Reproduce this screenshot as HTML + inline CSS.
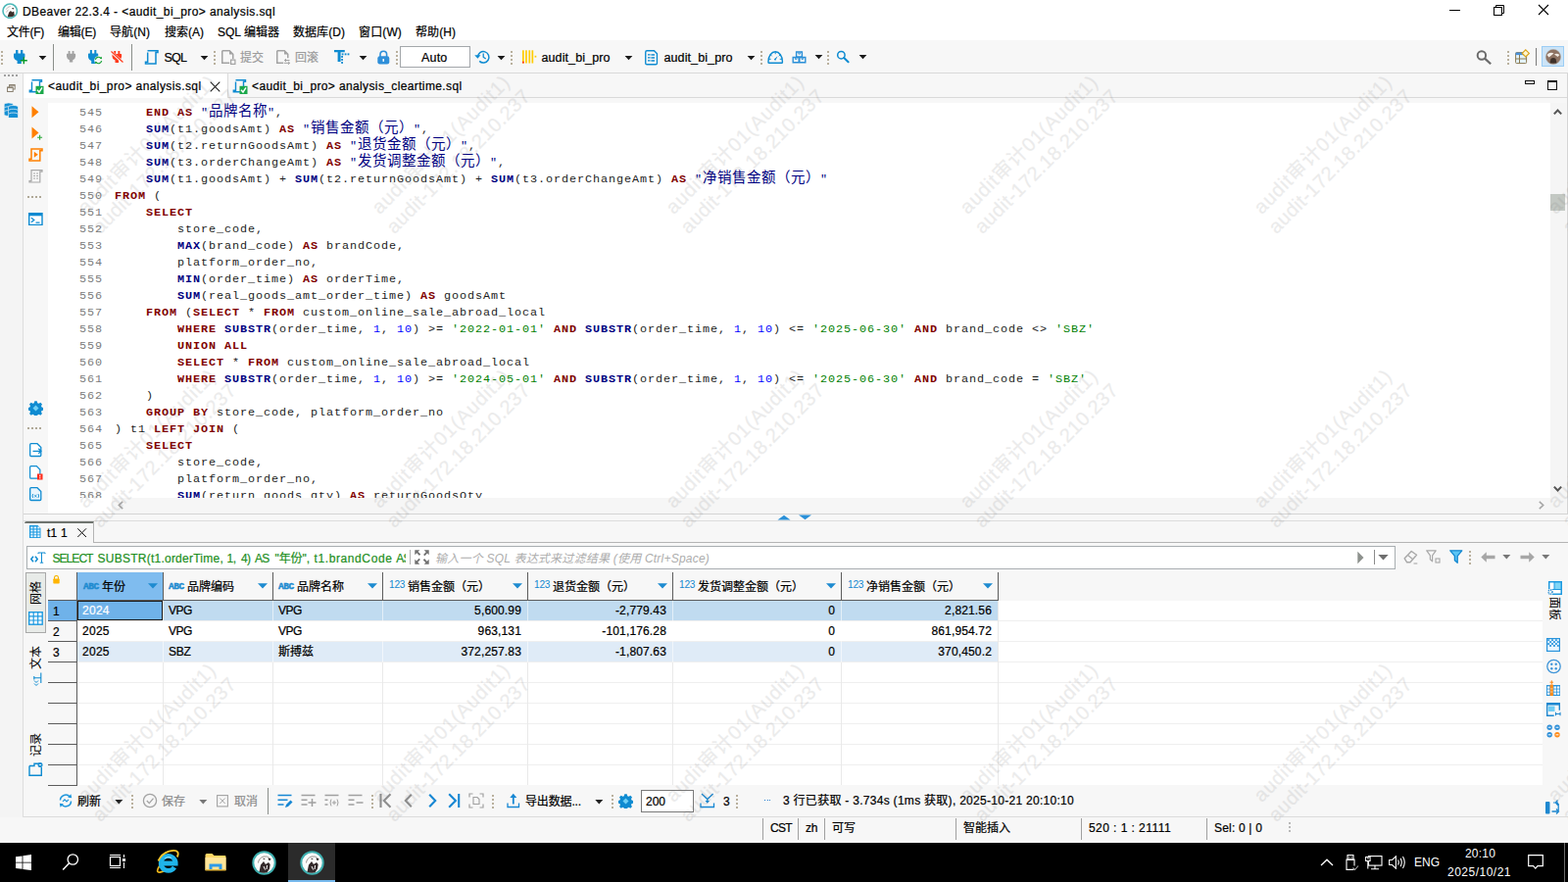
<!DOCTYPE html>
<html lang="zh-CN"><head><meta charset="utf-8"><title>DBeaver 22.3.4 - &lt;audit_bi_pro&gt; analysis.sql</title>
<style>
html,body{margin:0;padding:0;background:#f7f7f7;}
body{width:1600px;height:900px;overflow:hidden;position:relative;font-family:"Liberation Sans","Noto Sans CJK SC",sans-serif;font-size:12px;color:#000;}
.b{position:absolute;box-sizing:border-box;}
.t{position:absolute;white-space:pre;line-height:20px;height:20px;-webkit-text-stroke:0.22px;}
.code{position:absolute;white-space:pre;font-family:"Liberation Mono","Noto Sans CJK SC",monospace;font-size:11.8px;letter-spacing:0.919px;line-height:17px;height:17px;color:#1c1c1c;}
.code b{font-weight:bold;color:#800000;}
.code i{font-style:normal;font-weight:bold;color:#000080;}
.code s{text-decoration:none;color:#008000;}
.code u{text-decoration:none;color:#0000ff;}
.code q{quotes:none;color:#000080;}
.code q:before,.code q:after{content:none;}
.code em{font-style:normal;font-family:"Noto Sans CJK SC",sans-serif;font-size:14.5px;letter-spacing:0.5px;line-height:0;}
.ln{position:absolute;white-space:pre;font-family:"Liberation Mono",monospace;font-size:11.8px;letter-spacing:0.919px;line-height:17px;height:17px;color:#7b7b7b;left:81px;width:24px;text-align:right;}
.wm{position:absolute;white-space:pre;font-size:20px;line-height:24px;color:#787878;-webkit-text-stroke:0.25px #787878;opacity:0.14;transform-origin:0 0;transform:rotate(-45deg);pointer-events:none;}
</style></head><body>
<div class="b" style="left:0px;top:0px;width:1600px;height:41px;background:#fff;"></div>
<div class="t" style="left:23px;top:1.84px;font-size:12px;color:#000;letter-spacing:0.421px;">DBeaver 22.3.4 - &lt;audit_bi_pro&gt; analysis.sql</div>
<div class="t" style="left:7px;top:22.84px;font-size:12px;color:#000;letter-spacing:-0.266px;">文件(F)</div>
<div class="t" style="left:59px;top:22.84px;font-size:12px;color:#000;letter-spacing:-0.200px;">编辑(E)</div>
<div class="t" style="left:112px;top:22.84px;font-size:12px;color:#000;letter-spacing:0.066px;">导航(N)</div>
<div class="t" style="left:168px;top:22.84px;font-size:12px;color:#000;letter-spacing:0.000px;">搜索(A)</div>
<div class="t" style="left:222px;top:22.84px;font-size:12px;color:#000;letter-spacing:0.013px;">SQL 编辑器</div>
<div class="t" style="left:299px;top:22.84px;font-size:12px;color:#000;letter-spacing:0.055px;">数据库(D)</div>
<div class="t" style="left:366px;top:22.84px;font-size:12px;color:#000;letter-spacing:0.134px;">窗口(W)</div>
<div class="t" style="left:424px;top:22.84px;font-size:12px;color:#000;letter-spacing:0.066px;">帮助(H)</div>
<div class="b" style="left:0px;top:41px;width:1600px;height:34px;background:#f7f7f7;"></div>
<div class="b" style="left:0px;top:74px;width:1600px;height:1px;background:#d9d9d9;"></div>
<div class="b" style="left:0px;top:75px;width:1600px;height:26px;background:#f7f7f7;"></div>
<div class="b" style="left:0px;top:75px;width:24px;height:785px;background:#f4f4f4;"></div>
<div class="b" style="left:24px;top:75px;width:208px;height:25px;background:#fff;"></div>
<div class="b" style="left:232px;top:75px;width:1px;height:25px;background:#dadada;"></div>
<div class="b" style="left:233px;top:99px;width:1367px;height:1px;background:#dadada;"></div>
<div class="t" style="left:49px;top:77.84px;font-size:12px;color:#000;letter-spacing:0.410px;">&lt;audit_bi_pro&gt; analysis.sql</div>
<div class="t" style="left:257px;top:77.84px;font-size:12px;color:#000;letter-spacing:0.370px;">&lt;audit_bi_pro&gt; analysis_cleartime.sql</div>
<div class="b" style="left:24px;top:100px;width:1576px;height:425px;background:#f7f7f7;"></div>
<div class="b" style="left:49px;top:105px;width:1533px;height:419px;background:#fff;"></div>
<div class="b" style="left:1582px;top:105px;width:16px;height:419px;background:#f5f5f5;"></div>
<div class="b" style="left:114px;top:508px;width:1468px;height:16px;background:#f6f6f6;"></div>
<div class="b" style="left:24px;top:524px;width:1576px;height:1px;background:#d4d4d4;"></div>
<div class="b" style="left:1599px;top:75px;width:1px;height:758px;background:#d4d4d4;"></div>
<div class="b" style="left:49px;top:105px;width:1533px;height:403px;overflow:hidden;"><div class="ln" style="top:2px;left:32px">545</div><div class="code" style="left:68px;top:2px">    <b>END</b> <b>AS</b> <q>"<em>品牌名称</em>"</q>,</div><div class="ln" style="top:19px;left:32px">546</div><div class="code" style="left:68px;top:19px">    <i>SUM</i>(t1.goodsAmt) <b>AS</b> <q>"<em>销售金额（元）</em>"</q>,</div><div class="ln" style="top:36px;left:32px">547</div><div class="code" style="left:68px;top:36px">    <i>SUM</i>(t2.returnGoodsAmt) <b>AS</b> <q>"<em>退货金额（元）</em>"</q>,</div><div class="ln" style="top:53px;left:32px">548</div><div class="code" style="left:68px;top:53px">    <i>SUM</i>(t3.orderChangeAmt) <b>AS</b> <q>"<em>发货调整金额（元）</em>"</q>,</div><div class="ln" style="top:70px;left:32px">549</div><div class="code" style="left:68px;top:70px">    <i>SUM</i>(t1.goodsAmt) + <i>SUM</i>(t2.returnGoodsAmt) + <i>SUM</i>(t3.orderChangeAmt) <b>AS</b> <q>"<em>净销售金额（元）</em>"</q></div><div class="ln" style="top:87px;left:32px">550</div><div class="code" style="left:68px;top:87px"><b>FROM</b> (</div><div class="ln" style="top:104px;left:32px">551</div><div class="code" style="left:68px;top:104px">    <b>SELECT</b></div><div class="ln" style="top:121px;left:32px">552</div><div class="code" style="left:68px;top:121px">        store_code,</div><div class="ln" style="top:138px;left:32px">553</div><div class="code" style="left:68px;top:138px">        <i>MAX</i>(brand_code) <b>AS</b> brandCode,</div><div class="ln" style="top:155px;left:32px">554</div><div class="code" style="left:68px;top:155px">        platform_order_no,</div><div class="ln" style="top:172px;left:32px">555</div><div class="code" style="left:68px;top:172px">        <i>MIN</i>(order_time) <b>AS</b> orderTime,</div><div class="ln" style="top:189px;left:32px">556</div><div class="code" style="left:68px;top:189px">        <i>SUM</i>(real_goods_amt_order_time) <b>AS</b> goodsAmt</div><div class="ln" style="top:206px;left:32px">557</div><div class="code" style="left:68px;top:206px">    <b>FROM</b> (<b>SELECT</b> * <b>FROM</b> custom_online_sale_abroad_local</div><div class="ln" style="top:223px;left:32px">558</div><div class="code" style="left:68px;top:223px">        <b>WHERE</b> <i>SUBSTR</i>(order_time, <u>1</u>, <u>10</u>) &gt;= <s>'2022-01-01'</s> <b>AND</b> <i>SUBSTR</i>(order_time, <u>1</u>, <u>10</u>) &lt;= <s>'2025-06-30'</s> <b>AND</b> brand_code &lt;&gt; <s>'SBZ'</s></div><div class="ln" style="top:240px;left:32px">559</div><div class="code" style="left:68px;top:240px">        <b>UNION</b> <b>ALL</b></div><div class="ln" style="top:257px;left:32px">560</div><div class="code" style="left:68px;top:257px">        <b>SELECT</b> * <b>FROM</b> custom_online_sale_abroad_local</div><div class="ln" style="top:274px;left:32px">561</div><div class="code" style="left:68px;top:274px">        <b>WHERE</b> <i>SUBSTR</i>(order_time, <u>1</u>, <u>10</u>) &gt;= <s>'2024-05-01'</s> <b>AND</b> <i>SUBSTR</i>(order_time, <u>1</u>, <u>10</u>) &lt;= <s>'2025-06-30'</s> <b>AND</b> brand_code = <s>'SBZ'</s></div><div class="ln" style="top:291px;left:32px">562</div><div class="code" style="left:68px;top:291px">    )</div><div class="ln" style="top:308px;left:32px">563</div><div class="code" style="left:68px;top:308px">    <b>GROUP</b> <b>BY</b> store_code, platform_order_no</div><div class="ln" style="top:325px;left:32px">564</div><div class="code" style="left:68px;top:325px">) t1 <b>LEFT</b> <b>JOIN</b> (</div><div class="ln" style="top:342px;left:32px">565</div><div class="code" style="left:68px;top:342px">    <b>SELECT</b></div><div class="ln" style="top:359px;left:32px">566</div><div class="code" style="left:68px;top:359px">        store_code,</div><div class="ln" style="top:376px;left:32px">567</div><div class="code" style="left:68px;top:376px">        platform_order_no,</div><div class="ln" style="top:393px;left:32px">568</div><div class="code" style="left:68px;top:393px">        <i>SUM</i>(return_goods_qty) <b>AS</b> returnGoodsQty</div></div>
<div class="b" style="left:24px;top:525px;width:1576px;height:336px;background:#f7f7f7;"></div>
<div class="b" style="left:24px;top:531px;width:1576px;height:1px;background:#dcdcdc;"></div>
<div class="b" style="left:95px;top:553px;width:1505px;height:1px;background:#b4b4b4;"></div>
<div class="b" style="left:25px;top:532px;width:71px;height:22px;background:#f7f7f7;border-right:1px solid #b4b4b4;border-top:2px solid #6f746f;border-top-left-radius:2px;"></div>
<div class="t" style="left:48px;top:533.84px;font-size:12px;color:#000;letter-spacing:0.246px;">t1 1</div>
<div class="b" style="left:27px;top:557px;width:1397px;height:24px;background:#fff;border:1px solid #a9aeb1;"></div>
<div class="b" style="left:28px;top:558px;width:386px;height:22px;overflow:hidden;"><div class="t" style="left:25.5px;top:1.84px;font-size:12px;color:#1f8f1f;letter-spacing:-0.948px;">SELECT</div><div class="t" style="left:71.5px;top:1.84px;font-size:12px;color:#1f8f1f;letter-spacing:0.245px;">SUBSTR(t1.orderTime,</div><div class="t" style="left:203.5px;top:1.84px;font-size:12px;color:#1f8f1f;letter-spacing:-0.508px;">1,</div><div class="t" style="left:218px;top:1.84px;font-size:12px;color:#1f8f1f;letter-spacing:-0.586px;">4)</div><div class="t" style="left:232px;top:1.84px;font-size:12px;color:#1f8f1f;letter-spacing:-0.758px;">AS</div><div class="t" style="left:252.5px;top:1.84px;font-size:12px;color:#1f8f1f;letter-spacing:-0.072px;">"年份",</div><div class="t" style="left:292.5px;top:1.84px;font-size:12px;color:#1f8f1f;letter-spacing:0.605px;">t1.brandCode</div><div class="t" style="left:376.2px;top:1.84px;font-size:12px;color:#1f8f1f;letter-spacing:-0.758px;">AS</div></div>
<div class="b" style="left:418px;top:561px;width:1px;height:15px;background:#b0b0b0;"></div>
<div class="t" style="left:444px;top:559.84px;font-size:12px;color:#adadad;font-style:italic;letter-spacing:0.217px;;-webkit-text-stroke:0">输入一个 SQL 表达式来过滤结果 (使用 Ctrl+Space)</div>
<div class="b" style="left:49px;top:613px;width:1525px;height:188px;background:#fff;"></div>
<div class="b" style="left:49px;top:584px;width:970px;height:28px;background:#f7f7f7;"></div>
<div class="b" style="left:79px;top:584px;width:87px;height:28px;background:#7fbcef;"></div>
<div class="b" style="left:79px;top:613px;width:939px;height:20px;background:#c0dbf0;"></div>
<div class="b" style="left:79px;top:655px;width:939px;height:20px;background:#dfebf7;"></div>
<div class="b" style="left:49px;top:613px;width:29px;height:188px;background:#f7f7f7;"></div>
<div class="b" style="left:49px;top:613px;width:29px;height:20px;background:#6fb2e9;"></div>
<div class="b" style="left:79px;top:613px;width:87px;height:20px;background:#6fb2e9;border:1px solid #1a1a1a;"></div>
<div class="b" style="left:79px;top:633px;width:1495px;height:1px;background:#efefef;"></div>
<div class="b" style="left:79px;top:654px;width:1495px;height:1px;background:#efefef;"></div>
<div class="b" style="left:79px;top:675px;width:1495px;height:1px;background:#efefef;"></div>
<div class="b" style="left:79px;top:696px;width:1495px;height:1px;background:#efefef;"></div>
<div class="b" style="left:79px;top:717px;width:1495px;height:1px;background:#efefef;"></div>
<div class="b" style="left:79px;top:738px;width:1495px;height:1px;background:#efefef;"></div>
<div class="b" style="left:79px;top:759px;width:1495px;height:1px;background:#efefef;"></div>
<div class="b" style="left:79px;top:780px;width:1495px;height:1px;background:#efefef;"></div>
<div class="b" style="left:166px;top:613px;width:1px;height:188px;background:#e9e9e9;"></div>
<div class="b" style="left:278px;top:613px;width:1px;height:188px;background:#e9e9e9;"></div>
<div class="b" style="left:390px;top:613px;width:1px;height:188px;background:#e9e9e9;"></div>
<div class="b" style="left:538px;top:613px;width:1px;height:188px;background:#e9e9e9;"></div>
<div class="b" style="left:686px;top:613px;width:1px;height:188px;background:#e9e9e9;"></div>
<div class="b" style="left:858px;top:613px;width:1px;height:188px;background:#e9e9e9;"></div>
<div class="b" style="left:1018px;top:613px;width:1px;height:188px;background:#e9e9e9;"></div>
<div class="b" style="left:79px;top:613px;width:939px;height:20px;background:#c0dbf0;"></div>
<div class="b" style="left:79px;top:634px;width:939px;height:20px;background:#fff;"></div>
<div class="b" style="left:79px;top:655px;width:939px;height:20px;background:#dfebf7;"></div>
<div class="b" style="left:166px;top:613px;width:1px;height:63px;background:#fff;opacity:.55;"></div>
<div class="b" style="left:278px;top:613px;width:1px;height:63px;background:#fff;opacity:.55;"></div>
<div class="b" style="left:390px;top:613px;width:1px;height:63px;background:#fff;opacity:.55;"></div>
<div class="b" style="left:538px;top:613px;width:1px;height:63px;background:#fff;opacity:.55;"></div>
<div class="b" style="left:686px;top:613px;width:1px;height:63px;background:#fff;opacity:.55;"></div>
<div class="b" style="left:858px;top:613px;width:1px;height:63px;background:#fff;opacity:.55;"></div>
<div class="b" style="left:79px;top:613px;width:87px;height:20px;background:#6fb2e9;border:1px solid #1a1a1a;"></div>
<div class="b" style="left:49px;top:612px;width:970px;height:1px;background:#5c5c5c;"></div>
<div class="b" style="left:78px;top:584px;width:1px;height:218px;background:#5c5c5c;"></div>
<div class="b" style="left:166px;top:584px;width:1px;height:28px;background:#5c5c5c;"></div>
<div class="b" style="left:278px;top:584px;width:1px;height:28px;background:#5c5c5c;"></div>
<div class="b" style="left:390px;top:584px;width:1px;height:28px;background:#5c5c5c;"></div>
<div class="b" style="left:538px;top:584px;width:1px;height:28px;background:#5c5c5c;"></div>
<div class="b" style="left:686px;top:584px;width:1px;height:28px;background:#5c5c5c;"></div>
<div class="b" style="left:858px;top:584px;width:1px;height:28px;background:#5c5c5c;"></div>
<div class="b" style="left:1018px;top:584px;width:1px;height:28px;background:#5c5c5c;"></div>
<div class="b" style="left:49px;top:633px;width:29px;height:1px;background:#5c5c5c;"></div>
<div class="b" style="left:49px;top:654px;width:29px;height:1px;background:#5c5c5c;"></div>
<div class="b" style="left:49px;top:675px;width:29px;height:1px;background:#5c5c5c;"></div>
<div class="b" style="left:49px;top:696px;width:29px;height:1px;background:#5c5c5c;"></div>
<div class="b" style="left:49px;top:717px;width:29px;height:1px;background:#5c5c5c;"></div>
<div class="b" style="left:49px;top:738px;width:29px;height:1px;background:#5c5c5c;"></div>
<div class="b" style="left:49px;top:759px;width:29px;height:1px;background:#5c5c5c;"></div>
<div class="b" style="left:49px;top:780px;width:29px;height:1px;background:#5c5c5c;"></div>
<div class="b" style="left:49px;top:801px;width:29px;height:1px;background:#5c5c5c;"></div>
<div class="t" style="left:104px;top:588.84px;font-size:12px;color:#000;">年份</div>
<div class="t" style="left:85px;top:589.47px;font-size:9.5px;color:#1e8bd0;font-weight:700;font-family:'Liberation Mono','Noto Sans CJK SC',monospace;letter-spacing:-0.436px;;-webkit-text-stroke:0.45px #1e8bd0">ABC</div>
<svg class="b" style="left:151px;top:595px;" width="10" height="6" viewBox="0 0 10 6"><path d="M0 0.300H10L5 5.500Z" fill="#1e8bd0"/></svg>
<div class="t" style="left:191px;top:588.84px;font-size:12px;color:#000;">品牌编码</div>
<div class="t" style="left:172px;top:589.47px;font-size:9.5px;color:#1e8bd0;font-weight:700;font-family:'Liberation Mono','Noto Sans CJK SC',monospace;letter-spacing:-0.436px;;-webkit-text-stroke:0.45px #1e8bd0">ABC</div>
<svg class="b" style="left:263px;top:595px;" width="10" height="6" viewBox="0 0 10 6"><path d="M0 0.300H10L5 5.500Z" fill="#1e8bd0"/></svg>
<div class="t" style="left:303px;top:588.84px;font-size:12px;color:#000;">品牌名称</div>
<div class="t" style="left:284px;top:589.47px;font-size:9.5px;color:#1e8bd0;font-weight:700;font-family:'Liberation Mono','Noto Sans CJK SC',monospace;letter-spacing:-0.436px;;-webkit-text-stroke:0.45px #1e8bd0">ABC</div>
<svg class="b" style="left:375px;top:595px;" width="10" height="6" viewBox="0 0 10 6"><path d="M0 0.300H10L5 5.500Z" fill="#1e8bd0"/></svg>
<div class="t" style="left:416px;top:588.84px;font-size:12px;color:#000;">销售金额（元）</div>
<div class="t" style="left:397px;top:587.47px;font-size:10.2px;color:#1488d0;letter-spacing:-0.267px;;-webkit-text-stroke:0">123</div>
<svg class="b" style="left:523px;top:595px;" width="10" height="6" viewBox="0 0 10 6"><path d="M0 0.300H10L5 5.500Z" fill="#1e8bd0"/></svg>
<div class="t" style="left:564px;top:588.84px;font-size:12px;color:#000;">退货金额（元）</div>
<div class="t" style="left:545px;top:587.47px;font-size:10.2px;color:#1488d0;letter-spacing:-0.267px;;-webkit-text-stroke:0">123</div>
<svg class="b" style="left:671px;top:595px;" width="10" height="6" viewBox="0 0 10 6"><path d="M0 0.300H10L5 5.500Z" fill="#1e8bd0"/></svg>
<div class="t" style="left:712px;top:588.84px;font-size:12px;color:#000;">发货调整金额（元）</div>
<div class="t" style="left:693px;top:587.47px;font-size:10.2px;color:#1488d0;letter-spacing:-0.267px;;-webkit-text-stroke:0">123</div>
<svg class="b" style="left:843px;top:595px;" width="10" height="6" viewBox="0 0 10 6"><path d="M0 0.300H10L5 5.500Z" fill="#1e8bd0"/></svg>
<div class="t" style="left:884px;top:588.84px;font-size:12px;color:#000;">净销售金额（元）</div>
<div class="t" style="left:865px;top:587.47px;font-size:10.2px;color:#1488d0;letter-spacing:-0.267px;;-webkit-text-stroke:0">123</div>
<svg class="b" style="left:1003px;top:595px;" width="10" height="6" viewBox="0 0 10 6"><path d="M0 0.300H10L5 5.500Z" fill="#1e8bd0"/></svg>
<div class="t" style="left:54px;top:613.84px;font-size:12px;color:#000;">1</div>
<div class="t" style="left:84px;top:612.84px;font-size:12px;color:#fff;letter-spacing:0.274px;">2024</div>
<div class="t" style="left:172px;top:612.84px;font-size:12px;color:#000;letter-spacing:-0.448px;">VPG</div>
<div class="t" style="left:284px;top:612.84px;font-size:12px;color:#000;letter-spacing:-0.448px;">VPG</div>
<div class="t" style="right:1068px;top:612.84px;font-size:12px;color:#000;;letter-spacing:0.15px">5,600.99</div>
<div class="t" style="right:920px;top:612.84px;font-size:12px;color:#000;;letter-spacing:0.15px">-2,779.43</div>
<div class="t" style="right:748px;top:612.84px;font-size:12px;color:#000;;letter-spacing:0.15px">0</div>
<div class="t" style="right:588px;top:612.84px;font-size:12px;color:#000;;letter-spacing:0.15px">2,821.56</div>
<div class="t" style="left:54px;top:634.84px;font-size:12px;color:#000;">2</div>
<div class="t" style="left:84px;top:633.84px;font-size:12px;color:#000;letter-spacing:0.274px;">2025</div>
<div class="t" style="left:172px;top:633.84px;font-size:12px;color:#000;letter-spacing:-0.448px;">VPG</div>
<div class="t" style="left:284px;top:633.84px;font-size:12px;color:#000;letter-spacing:-0.448px;">VPG</div>
<div class="t" style="right:1068px;top:633.84px;font-size:12px;color:#000;;letter-spacing:0.15px">963,131</div>
<div class="t" style="right:920px;top:633.84px;font-size:12px;color:#000;;letter-spacing:0.15px">-101,176.28</div>
<div class="t" style="right:748px;top:633.84px;font-size:12px;color:#000;;letter-spacing:0.15px">0</div>
<div class="t" style="right:588px;top:633.84px;font-size:12px;color:#000;;letter-spacing:0.15px">861,954.72</div>
<div class="t" style="left:54px;top:655.84px;font-size:12px;color:#000;">3</div>
<div class="t" style="left:84px;top:654.84px;font-size:12px;color:#000;letter-spacing:0.274px;">2025</div>
<div class="t" style="left:172px;top:654.84px;font-size:12px;color:#000;letter-spacing:-0.281px;">SBZ</div>
<div class="t" style="left:284px;top:654.84px;font-size:12px;color:#000;letter-spacing:-0.005px;">斯搏兹</div>
<div class="t" style="right:1068px;top:654.84px;font-size:12px;color:#000;;letter-spacing:0.15px">372,257.83</div>
<div class="t" style="right:920px;top:654.84px;font-size:12px;color:#000;;letter-spacing:0.15px">-1,807.63</div>
<div class="t" style="right:748px;top:654.84px;font-size:12px;color:#000;;letter-spacing:0.15px">0</div>
<div class="t" style="right:588px;top:654.84px;font-size:12px;color:#000;;letter-spacing:0.15px">370,450.2</div>
<div class="b" style="left:26px;top:584px;width:21px;height:62px;background:#e8ebe8;border:1px solid #a9a9a9;"></div>
<div class="t" style="left:27px;top:617px;width:20px;height:20px;transform-origin:0 0;transform:rotate(-90deg);font-size:12px;-webkit-text-stroke:0;">网格</div>
<div class="t" style="left:27px;top:683px;width:20px;height:20px;transform-origin:0 0;transform:rotate(-90deg);font-size:12px;-webkit-text-stroke:0;">文本</div>
<div class="t" style="left:27px;top:772px;width:20px;height:20px;transform-origin:0 0;transform:rotate(-90deg);font-size:12px;-webkit-text-stroke:0;">记录</div>
<div class="b" style="left:1575px;top:584px;width:25px;height:248px;background:#f7f7f7;"></div>
<div class="t" style="left:1596px;top:609px;width:24px;height:20px;transform-origin:0 0;transform:rotate(90deg);font-size:12px;-webkit-text-stroke:0;">面板</div>
<div class="b" style="left:24px;top:802px;width:1551px;height:31px;background:#f7f7f7;"></div>
<div class="b" style="left:24px;top:833px;width:1576px;height:1px;background:#dcdcdc;"></div>
<div class="t" style="left:79px;top:807.84px;font-size:12px;color:#000;letter-spacing:-0.008px;">刷新</div>
<div class="t" style="left:165px;top:807.84px;font-size:12px;color:#8c8c8c;letter-spacing:-0.008px;">保存</div>
<div class="t" style="left:239px;top:807.84px;font-size:12px;color:#8c8c8c;letter-spacing:-0.008px;">取消</div>
<div class="t" style="left:536px;top:807.84px;font-size:12px;color:#000;letter-spacing:-0.145px;">导出数据...</div>
<div class="b" style="left:654px;top:806px;width:54px;height:23px;background:#fff;border:1px solid #7a7a7a;"></div>
<div class="t" style="left:659px;top:807.84px;font-size:12px;color:#000;letter-spacing:-0.010px;">200</div>
<div class="t" style="left:738px;top:807.84px;font-size:12px;color:#000;letter-spacing:-0.688px;">3</div>
<div class="t" style="left:799px;top:806.84px;font-size:12px;color:#000;letter-spacing:0.286px;">3 行已获取 - 3.734s (1ms 获取), 2025-10-21 20:10:10</div>
<div class="b" style="left:0px;top:834px;width:1600px;height:26px;background:#f7f7f7;"></div>
<div class="b" style="left:778px;top:835px;width:1px;height:22px;background:#a0a0a0;"></div>
<div class="b" style="left:814px;top:835px;width:1px;height:22px;background:#a0a0a0;"></div>
<div class="b" style="left:841px;top:835px;width:1px;height:22px;background:#a0a0a0;"></div>
<div class="b" style="left:975px;top:835px;width:1px;height:22px;background:#a0a0a0;"></div>
<div class="b" style="left:1103px;top:835px;width:1px;height:22px;background:#a0a0a0;"></div>
<div class="b" style="left:1231px;top:835px;width:1px;height:22px;background:#a0a0a0;"></div>
<div class="t" style="left:786px;top:834.84px;font-size:12px;color:#000;letter-spacing:-0.667px;">CST</div>
<div class="t" style="left:822px;top:834.84px;font-size:12px;color:#000;letter-spacing:-0.344px;">zh</div>
<div class="t" style="left:849px;top:834.84px;font-size:12px;color:#000;letter-spacing:-0.008px;">可写</div>
<div class="t" style="left:983px;top:834.84px;font-size:12px;color:#000;letter-spacing:-0.004px;">智能插入</div>
<div class="t" style="left:1111px;top:834.84px;font-size:12px;color:#000;letter-spacing:0.440px;">520 : 1 : 21111</div>
<div class="t" style="left:1239px;top:834.84px;font-size:12px;color:#000;letter-spacing:0.184px;">Sel: 0 | 0</div>
<div class="b" style="left:0px;top:860px;width:1600px;height:40px;background:#000;"></div>
<div class="b" style="left:294px;top:860px;width:48px;height:40px;background:#2b2b2b;"></div>
<div class="b" style="left:294px;top:898px;width:48px;height:2px;background:#76b9ed;"></div>
<div class="t" style="left:1443px;top:869.84px;font-size:12px;color:#fff;letter-spacing:-0.005px;;-webkit-text-stroke:0">ENG</div>
<div class="t" style="left:1495px;top:860.84px;font-size:12px;color:#fff;letter-spacing:0.194px;;-webkit-text-stroke:0">20:10</div>
<div class="t" style="left:1477px;top:879.84px;font-size:12px;color:#fff;letter-spacing:0.494px;;-webkit-text-stroke:0">2025/10/21</div>
<div class="b" style="left:1596px;top:860px;width:1px;height:40px;background:#6a6a6a;"></div>
<svg class="b" style="left:1.7999999999999998px;top:2.8px;" width="16.4" height="16.4" viewBox="0 0 16.4 16.4"><g transform="translate(8.2,8.2)"><circle r="7.2" fill="#fff" stroke="#4db8b8" stroke-width="1.600"/><path d="M-2.500 5.800L-1 1.200L0.800 -0.300L2.200 1.300L4 0.300L4.600 4.800Q1.500 6.600 -2.500 5.800Z" fill="#3a2f2a"/><path d="M-4 -1.500q1.500-3 4.500-3.200M-3.500 1.500q.5-2 2-3" fill="none" stroke="#b9b3ae" stroke-width="0.900"/><path d="M1.800 -3.300l2.400 .3l-1.200 1.500z" fill="#3a2f2a"/></g></svg>
<div class="b" style="left:1479px;top:10px;width:11px;height:1px;background:#000;"></div>
<svg class="b" style="left:1523px;top:4px;" width="12" height="12" viewBox="0 0 12 12"><path d="M3.5 3.500v-2h8v8h-2" fill="none" stroke="#000" stroke-width="1"/><rect x="1.500" y="3.500" width="8" height="8" fill="none" stroke="#000" stroke-width="1"/></svg>
<svg class="b" style="left:1569px;top:4px;" width="12" height="12" viewBox="0 0 12 12"><path d="M1 1L11 11M11 1L1 11" stroke="#000" stroke-width="1.100" fill="none"/></svg>
<div class="b" style="left:1px;top:52px;width:2px;height:2px;background:#b9b09d;"></div><div class="b" style="left:1px;top:56px;width:2px;height:2px;background:#b9b09d;"></div><div class="b" style="left:1px;top:60px;width:2px;height:2px;background:#b9b09d;"></div><div class="b" style="left:1px;top:64px;width:2px;height:2px;background:#b9b09d;"></div>
<svg class="b" style="left:14px;top:51px;" width="15" height="15" viewBox="0 0 15 15"><path d="M2.2 0h2.400v3.400h2.800v-3.400h2.400v3.400h1.400q.8 0 .8 .9v2.400q0 2.800-3.800 4.400v2.900h-4.400v-2.900q-3.800-1.600-3.800-4.400v-2.400q0-.9 .8-.9h1.400z" fill="#0e8bd1" transform="scale(0.95,1)"/><path d="M6.500 6.800h8v8h-8z" fill="#f7f7f7" opacity="0"/><path d="M10.300 7.300v7M6.800 10.800h7" stroke="#0a9a2a" stroke-width="1.400" fill="none"/></svg>
<svg class="b" style="left:39px;top:57px;" width="9" height="5" viewBox="0 0 9 5"><path d="M0.6 0H8.400L4.500 4.300Z" fill="#1a1a1a"/></svg>
<div class="b" style="left:54px;top:45px;width:1px;height:27px;background:#8b8f8b;"></div>
<svg class="b" style="left:68px;top:52px;" width="10" height="12" viewBox="0 0 10 12"><path d="M2.2 0h2.400v3.400h2.800v-3.400h2.400v3.400h1.400q.8 0 .8 .9v2.400q0 2.800-3.800 4.400v2.900h-4.400v-2.900q-3.800-1.600-3.800-4.400v-2.400q0-.9 .8-.9h1.400z" fill="#a2a2a2" transform="scale(0.76,0.83)"/></svg>
<svg class="b" style="left:90px;top:51px;" width="15" height="15" viewBox="0 0 15 15"><path d="M2.2 0h2.400v3.400h2.800v-3.400h2.400v3.400h1.400q.8 0 .8 .9v2.400q0 2.800-3.800 4.400v2.900h-4.400v-2.900q-3.800-1.600-3.800-4.400v-2.400q0-.9 .8-.9h1.400z" fill="#0e8bd1" transform="scale(0.85,1)"/><circle cx="10.500" cy="10.500" r="4.300" fill="#f7f7f7"/><path d="M7.300 9.800a3.300 3.300 0 0 1 5.600-1.500M13.700 11.200a3.300 3.300 0 0 1-5.600 1.500" fill="none" stroke="#18a338" stroke-width="1.200"/><path d="M11.600 8.800l2.400 .4l-.2-2.500zM9.400 12.200l-2.400-.4l.2 2.500z" fill="#18a338"/></svg>
<svg class="b" style="left:113px;top:51px;" width="13" height="14" viewBox="0 0 13 14"><path d="M2.2 0h2.400v3.400h2.800v-3.400h2.400v3.400h1.400q.8 0 .8 .9v2.400q0 2.800-3.800 4.400v2.900h-4.400v-2.900q-3.800-1.600-3.800-4.400v-2.400q0-.9 .8-.9h1.400z" fill="#ff3a1c" transform="translate(1.500,1) scale(0.8,0.85)"/><path d="M0.500 2L12 12.500" stroke="#f7f7f7" stroke-width="2.600"/><path d="M0.500 1.500L12.500 12.500" stroke="#ff3a1c" stroke-width="1.200"/></svg>
<div class="b" style="left:134px;top:45px;width:1px;height:27px;background:#8b8f8b;"></div>
<svg class="b" style="left:147px;top:51px;" width="15" height="15" viewBox="0 0 15 15"><path d="M3.500 0.800h10.500v1.800h-2v11.400h-10.500v-1.800h2.200v-9.600" fill="none" stroke="#0e8bd1" stroke-width="1.500" stroke-linejoin="miter"/></svg>
<div class="t" style="left:167.5px;top:48.67px;font-size:12.5px;color:#000;letter-spacing:-0.839px;">SQL</div>
<svg class="b" style="left:204px;top:57px;" width="9" height="5" viewBox="0 0 9 5"><path d="M0.6 0H8.400L4.500 4.300Z" fill="#1a1a1a"/></svg>
<div class="b" style="left:218px;top:52px;width:2px;height:2px;background:#b9b09d;"></div><div class="b" style="left:218px;top:56px;width:2px;height:2px;background:#b9b09d;"></div><div class="b" style="left:218px;top:60px;width:2px;height:2px;background:#b9b09d;"></div><div class="b" style="left:218px;top:64px;width:2px;height:2px;background:#b9b09d;"></div>
<svg class="b" style="left:226px;top:51px;" width="15" height="15" viewBox="0 0 15 15"><path d="M.75 .75h7.500l3.500 3.500v5M.75 .75v12.500h7.500" fill="none" stroke="#a3a3a3" stroke-width="1.500"/><path d="M8 .5v4h4z" fill="#a3a3a3"/><rect x="9.600" y="10.100" width="4.300" height="4.300" fill="none" stroke="#a3a3a3" stroke-width="1.200"/></svg>
<div class="t" style="left:245px;top:48.84px;font-size:12px;color:#9c9c9c;letter-spacing:-0.008px;">提交</div>
<svg class="b" style="left:282px;top:51px;" width="15" height="15" viewBox="0 0 15 15"><path d="M.75 .75h7.500l3.500 3.500v4M.75 .75v12.500h6.500" fill="none" stroke="#a3a3a3" stroke-width="1.500"/><path d="M8 .5v4h4z" fill="#a3a3a3"/><path d="M8.500 10.500h5M10 9l-1.700 1.500l1.700 1.500M8 13.300h5.500M12 11.800l1.700 1.500l-1.700 1.500" fill="none" stroke="#a3a3a3" stroke-width="1"/></svg>
<div class="t" style="left:301px;top:48.84px;font-size:12px;color:#9c9c9c;letter-spacing:-0.008px;">回滚</div>
<svg class="b" style="left:341px;top:51px;" width="16" height="15" viewBox="0 0 16 15"><path d="M0 0h10.800v2.200h-4.200v9.700h-3v-9.700h-3.600z" fill="#0e8bd1"/><rect x="7.7" y="3.400" width="1.800" height="1.900" fill="#0e8bd1"/><rect x="10.7" y="3.400" width="1.800" height="1.900" fill="#0e8bd1"/><rect x="13.6" y="3.400" width="1.800" height="1.900" fill="#0e8bd1"/><rect x="7.200" y="6" width="1.800" height="1.900" fill="#0e8bd1"/><rect x="7.200" y="9" width="1.800" height="1.900" fill="#0e8bd1"/><rect x="7.200" y="12" width="1.800" height="1.900" fill="#0e8bd1"/></svg>
<svg class="b" style="left:366px;top:57px;" width="9" height="5" viewBox="0 0 9 5"><path d="M0.6 0H8.400L4.500 4.300Z" fill="#1a1a1a"/></svg>
<svg class="b" style="left:385px;top:51px;" width="13" height="15" viewBox="0 0 13 15"><path d="M3 7v-2.500a3.300 3.300 0 0 1 6.600 0v2.500" fill="none" stroke="#2f8fd9" stroke-width="1.600"/><rect x="0.300" y="6.200" width="12" height="8.300" rx="2.300" fill="#2f8fd9"/><rect x="5.500" y="9" width="1.500" height="2.800" fill="#fff"/></svg>
<div class="b" style="left:404px;top:52px;width:2px;height:2px;background:#b9b09d;"></div><div class="b" style="left:404px;top:56px;width:2px;height:2px;background:#b9b09d;"></div><div class="b" style="left:404px;top:60px;width:2px;height:2px;background:#b9b09d;"></div><div class="b" style="left:404px;top:64px;width:2px;height:2px;background:#b9b09d;"></div>
<div class="b" style="left:408px;top:47px;width:72px;height:22px;background:#fff;border:1px solid #a3a7ab;"></div>
<div class="t" style="left:430px;top:48.67px;font-size:12.5px;color:#000;letter-spacing:0.195px;">Auto</div>
<svg class="b" style="left:484px;top:50px;" width="17" height="16" viewBox="0 0 17 16"><path d="M3.500 8a5.700 5.700 0 1 1 1.700 4.400" fill="none" stroke="#0e8bd1" stroke-width="1.500"/><path d="M0.300 6.200h6.200l-3.100 3.500z" fill="#0e8bd1"/><path d="M9.200 4.500v3.700l2.500 1.800" fill="none" stroke="#0e8bd1" stroke-width="1.300"/></svg>
<svg class="b" style="left:507px;top:57px;" width="9" height="5" viewBox="0 0 9 5"><path d="M0.6 0H8.400L4.500 4.300Z" fill="#1a1a1a"/></svg>
<div class="b" style="left:521px;top:52px;width:2px;height:2px;background:#b9b09d;"></div><div class="b" style="left:521px;top:56px;width:2px;height:2px;background:#b9b09d;"></div><div class="b" style="left:521px;top:60px;width:2px;height:2px;background:#b9b09d;"></div><div class="b" style="left:521px;top:64px;width:2px;height:2px;background:#b9b09d;"></div>
<svg class="b" style="left:533px;top:51px;" width="15" height="14" viewBox="0 0 15 14"><rect x="0" y="0.300" width="1.700" height="13.200" fill="#ffcc00"/><rect x="3.1" y="0.300" width="1.700" height="13.200" fill="#ffcc00"/><rect x="6.4" y="0.300" width="1.700" height="13.200" fill="#ffcc00"/><rect x="9.5" y="0.300" width="1.700" height="13.200" fill="#ffcc00"/><rect x="0" y="11.700" width="1.700" height="1.800" fill="#ff2a1a"/><rect x="12.600" y="5.800" width="1.700" height="1.800" fill="#ffcc00"/></svg>
<div class="t" style="left:552.5px;top:48.67px;font-size:12.5px;color:#000;letter-spacing:0.099px;">audit_bi_pro</div>
<svg class="b" style="left:637px;top:57px;" width="9" height="5" viewBox="0 0 9 5"><path d="M0.6 0H8.400L4.500 4.300Z" fill="#1a1a1a"/></svg>
<svg class="b" style="left:658px;top:51px;" width="14" height="16" viewBox="0 0 14 16"><path d="M.75 2.200q0-1.400 1.400-1.400h7.300l3 3v9.600q0 1.400-1.400 1.400h-8.900q-1.400 0-1.400-1.400z" fill="none" stroke="#0e8bd1" stroke-width="1.400"/><rect x="3" y="4.2" width="2.600" height="1.300" fill="#0e8bd1"/><rect x="6.400" y="4.2" width="3.600" height="1.500" fill="#0e8bd1"/><rect x="3" y="7.2" width="2.600" height="1.300" fill="#0e8bd1"/><rect x="6.400" y="7.2" width="3.600" height="1.500" fill="#0e8bd1"/><rect x="3" y="10.2" width="2.600" height="1.300" fill="#0e8bd1"/><rect x="6.400" y="10.2" width="3.600" height="1.500" fill="#0e8bd1"/></svg>
<div class="t" style="left:677.5px;top:48.67px;font-size:12.5px;color:#000;letter-spacing:0.099px;">audit_bi_pro</div>
<svg class="b" style="left:762px;top:57px;" width="9" height="5" viewBox="0 0 9 5"><path d="M0.6 0H8.400L4.500 4.300Z" fill="#1a1a1a"/></svg>
<div class="b" style="left:776px;top:52px;width:2px;height:2px;background:#b9b09d;"></div><div class="b" style="left:776px;top:56px;width:2px;height:2px;background:#b9b09d;"></div><div class="b" style="left:776px;top:60px;width:2px;height:2px;background:#b9b09d;"></div><div class="b" style="left:776px;top:64px;width:2px;height:2px;background:#b9b09d;"></div>
<svg class="b" style="left:783px;top:51px;" width="17" height="15" viewBox="0 0 17 15"><path d="M1 11.800A7.200 10 0 0 1 15.400 11.800v.7q0 .8-.8 .8h-12.800q-.8 0-.8-.8z" fill="none" stroke="#0e8bd1" stroke-width="1.400"/><path d="M8.200 2v2.200M3.200 4.800l1.400 1.500M13.200 4.800l-1.400 1.500M1.500 9.300h2.200M12.700 9.300h2.200" stroke="#0e8bd1" stroke-width="1"/><path d="M10.600 6.300l-3.800 3.300l1.300 1.300z" fill="#0e8bd1"/></svg>
<svg class="b" style="left:807.5px;top:51.5px;" width="15" height="13" viewBox="0 0 15 13"><path d="M4.600 1h5.800v5h-5.800zM1.200 6.500h6v5.300h-6zM7.800 6.500h6v5.300h-6z" fill="none" stroke="#2a8fd8" stroke-width="1.400"/><path d="M6.800 1.500v1.600h1.600v-1.600M3.400 7v1.400h1.600v-1.400M10 7v1.400h1.600v-1.400" fill="none" stroke="#2a8fd8" stroke-width="0.900"/></svg>
<svg class="b" style="left:831px;top:56px;" width="9" height="5" viewBox="0 0 9 5"><path d="M0.6 0H8.400L4.500 4.300Z" fill="#1a1a1a"/></svg>
<div class="b" style="left:844px;top:52px;width:2px;height:2px;background:#b9b09d;"></div><div class="b" style="left:844px;top:56px;width:2px;height:2px;background:#b9b09d;"></div><div class="b" style="left:844px;top:60px;width:2px;height:2px;background:#b9b09d;"></div><div class="b" style="left:844px;top:64px;width:2px;height:2px;background:#b9b09d;"></div>
<svg class="b" style="left:852px;top:50px;" width="16" height="16" viewBox="0 0 16 16"><circle cx="6.400" cy="6.200" r="3.700" fill="none" stroke="#0e8bd1" stroke-width="1.500"/><path d="M9.200 9l4.400 4.300" stroke="#0e8bd1" stroke-width="2" stroke-linecap="round"/></svg>
<svg class="b" style="left:876px;top:56px;" width="9" height="5" viewBox="0 0 9 5"><path d="M0.6 0H8.400L4.500 4.300Z" fill="#1a1a1a"/></svg>
<svg class="b" style="left:1505px;top:50px;" width="18" height="17" viewBox="0 0 18 17"><circle cx="6.900" cy="6.500" r="4.200" fill="none" stroke="#6b6b6b" stroke-width="2"/><path d="M10 9.600l6.200 5.700" stroke="#6b6b6b" stroke-width="2.200" stroke-linecap="butt"/></svg>
<div class="b" style="left:1538px;top:52px;width:2px;height:2px;background:#b9b09d;"></div><div class="b" style="left:1538px;top:56px;width:2px;height:2px;background:#b9b09d;"></div><div class="b" style="left:1538px;top:60px;width:2px;height:2px;background:#b9b09d;"></div><div class="b" style="left:1538px;top:64px;width:2px;height:2px;background:#b9b09d;"></div>
<svg class="b" style="left:1546px;top:50px;" width="16" height="16" viewBox="0 0 16 16"><rect x="0.600" y="3.600" width="11" height="11" rx="1" fill="#e4f3fd" stroke="#8a7a50" stroke-width="1"/><rect x="0.600" y="3.600" width="11" height="2.500" fill="#4b90d8"/><path d="M0.600 10h11M4.500 6v8.500" stroke="#8a7a50" stroke-width="1"/><path d="M10.800 0.800l3.600 3.600l-3.600 3.600l-3.600-3.600z" fill="#fff6d0" stroke="#d9a31a" stroke-width="1.200"/></svg>
<div class="b" style="left:1567px;top:49px;width:1px;height:18px;background:#7b7b7b;"></div>
<div class="b" style="left:1573px;top:47px;width:23px;height:21px;background:#cce4f7;border:1px solid #9bcdf5;"></div>
<svg class="b" style="left:1577px;top:50px;" width="16" height="16" viewBox="0 0 16 16"><circle cx="8" cy="8" r="7.600" fill="#8d7262"/><path d="M1.500 6q3-3.500 7-1.500l-5 4z" fill="#f4efe9"/><path d="M14.500 6q-3-2-5.500-.5l3.500 2.500z" fill="#efe8e0"/><path d="M5.500 10q2.500-2 5 0l1 4.500h-7z" fill="#3d3029"/><circle cx="8" cy="8" r="7.600" fill="none" stroke="#a89a8e" stroke-width="0.500"/></svg>
<div class="b" style="left:23px;top:75px;width:1px;height:759px;background:#dedede;"></div>
<div class="b" style="left:4px;top:76px;width:2px;height:2px;background:#a0a0a0;"></div>
<div class="b" style="left:8px;top:76px;width:2px;height:2px;background:#a0a0a0;"></div>
<div class="b" style="left:12px;top:76px;width:2px;height:2px;background:#a0a0a0;"></div>
<div class="b" style="left:16px;top:76px;width:2px;height:2px;background:#a0a0a0;"></div>
<svg class="b" style="left:7px;top:86px;" width="9" height="8" viewBox="0 0 9 8"><rect x="2.500" y="0.700" width="5.700" height="4.300" fill="none" stroke="#8b8272" stroke-width="1"/><path d="M2.500 0.800h5.700" stroke="#8b8272" stroke-width="1.600"/><rect x="0.500" y="3.200" width="5.700" height="4.300" fill="#f4f4f4" stroke="#8b8272" stroke-width="1"/><path d="M0.500 3.300h5.700" stroke="#8b8272" stroke-width="1.600"/></svg>
<svg class="b" style="left:3px;top:104px;" width="17" height="16" viewBox="0 0 17 16"><path d="M1.2000000000000002 2.8a4.6 1.9 0 0 1 9.2 0v2.2a4.6 1.9 0 0 1 -9.2 0z" fill="#1590d4" stroke="#f6f6f6" stroke-width="0.700"/><path d="M1.2000000000000002 6.6a4.6 1.9 0 0 1 9.2 0v2.2a4.6 1.9 0 0 1 -9.2 0z" fill="#1590d4" stroke="#f6f6f6" stroke-width="0.700"/><path d="M1.2000000000000002 10.4a4.6 1.9 0 0 1 9.2 0v2.2a4.6 1.9 0 0 1 -9.2 0z" fill="#1590d4" stroke="#f6f6f6" stroke-width="0.700"/><path d="M5.5 5.6a5 2.1 0 0 1 10 0v2.2a5 2.1 0 0 1 -10 0z" fill="#1590d4" stroke="#f6f6f6" stroke-width="0.700"/><path d="M5.5 9.4a5 2.1 0 0 1 10 0v2.2a5 2.1 0 0 1 -10 0z" fill="#1590d4" stroke="#f6f6f6" stroke-width="0.700"/><path d="M5.5 13.2a5 2.1 0 0 1 10 0v2.2a5 2.1 0 0 1 -10 0z" fill="#1590d4" stroke="#f6f6f6" stroke-width="0.700"/></svg>
<svg class="b" style="left:29px;top:81px;" width="16" height="16" viewBox="0 0 16 16"><path d="M3.500 0.800h10v1.600h-2v10.400h-10.200v-1.600h2.200v-8.800" fill="none" stroke="#0e8bd1" stroke-width="1.400"/><rect x="7.500" y="6.800" width="8" height="8.200" fill="#1aa84a"/><path d="M9 10.800l2 2.200l3-4.600" fill="none" stroke="#fff" stroke-width="1.400"/></svg>
<svg class="b" style="left:214px;top:83px;" width="11" height="11" viewBox="0 0 11 11"><path d="M0.700 0.700L10.300 10.300M10.300 0.700L0.700 10.300" stroke="#1a1a1a" stroke-width="1.100"/></svg>
<svg class="b" style="left:237px;top:81px;" width="16" height="16" viewBox="0 0 16 16"><path d="M3.500 0.800h10v1.600h-2v10.400h-10.200v-1.600h2.200v-8.800" fill="none" stroke="#0e8bd1" stroke-width="1.400"/><rect x="7.500" y="6.800" width="8" height="8.200" fill="#1aa84a"/><path d="M9 10.800l2 2.200l3-4.600" fill="none" stroke="#fff" stroke-width="1.400"/></svg>
<svg class="b" style="left:1555px;top:81px;" width="12" height="6" viewBox="0 0 12 6"><rect x="1.500" y="1.500" width="9" height="3" fill="none" stroke="#111" stroke-width="1"/></svg>
<svg class="b" style="left:1578px;top:81px;" width="12" height="12" viewBox="0 0 12 12"><rect x="1.500" y="1.500" width="9" height="9" fill="none" stroke="#111" stroke-width="1"/><rect x="1" y="1" width="10" height="2" fill="#111"/></svg>
<svg class="b" style="left:32px;top:108px;" width="8" height="13" viewBox="0 0 8 13"><path d="M0.500 0.200L7.500 6.200L0.500 12.200z" fill="#ff8000"/></svg>
<svg class="b" style="left:32px;top:129px;" width="12" height="14" viewBox="0 0 12 14"><path d="M0.500 0.500L7.500 6.500L0.500 12.500z" fill="#ff8000"/><path d="M8.600 8.800v5M6.100 11.300h5" stroke="#2aa83a" stroke-width="1.100"/></svg>
<svg class="b" style="left:29px;top:151px;" width="15" height="14" viewBox="0 0 15 14"><path d="M3 0.900h11v1.800h-2.200v10.300h-10.800v-1.800h2v-8.700z" fill="none" stroke="#ff8000" stroke-width="1.500"/><path d="M5.800 3.800l4 3l-4 3z" fill="#ff8000"/></svg>
<svg class="b" style="left:29px;top:173px;" width="15" height="14" viewBox="0 0 15 14"><path d="M3 0.700h11v1.400h-2.200v10.900h-10.800v-1.400h2v-9.500z" fill="none" stroke="#a9a9a9" stroke-width="1.200"/><path d="M5 4h2M8 4h2M5 6.500h2M8 6.500h2M5 9h2M8 9h2" stroke="#a9a9a9" stroke-width="1"/></svg>
<div class="b" style="left:28px;top:200px;width:2px;height:2px;background:#b0a998;"></div>
<div class="b" style="left:28px;top:436px;width:2px;height:2px;background:#b0a998;"></div>
<div class="b" style="left:32px;top:200px;width:2px;height:2px;background:#b0a998;"></div>
<div class="b" style="left:32px;top:436px;width:2px;height:2px;background:#b0a998;"></div>
<div class="b" style="left:36px;top:200px;width:2px;height:2px;background:#b0a998;"></div>
<div class="b" style="left:36px;top:436px;width:2px;height:2px;background:#b0a998;"></div>
<div class="b" style="left:40px;top:200px;width:2px;height:2px;background:#b0a998;"></div>
<div class="b" style="left:40px;top:436px;width:2px;height:2px;background:#b0a998;"></div>
<svg class="b" style="left:29px;top:217px;" width="15" height="13" viewBox="0 0 15 13"><rect x="0.700" y="0.700" width="13.300" height="11.800" fill="#fff" stroke="#0e8bd1" stroke-width="1.400"/><rect x="0.700" y="0.700" width="13.300" height="2.600" fill="#0e8bd1"/><path d="M2.800 5.200l3 2.300l-3 2.300M7.500 10.200h4" fill="none" stroke="#0e8bd1" stroke-width="1.300"/></svg>
<svg class="b" style="left:28.5px;top:408.5px;" width="15" height="15" viewBox="0 0 15 15"><g transform="translate(0.300,0.300)"><path d="M6 0h2.400l.5 1.900l1.400 .6l1.700-1l1.700 1.700l-1 1.700l.6 1.400l1.900 .5v2.400l-1.900 .5l-.6 1.400l1 1.700l-1.700 1.700l-1.700-1l-1.400 .6l-.5 1.900h-2.400l-.5-1.900l-1.400-.6l-1.700 1l-1.700-1.700l1-1.700l-.6-1.400l-1.900-.5v-2.400l1.900-.5l.6-1.400l-1-1.700l1.700-1.700l1.700 1l1.400-.6z" fill="#0e8bd1"/><path d="M7.200 4.200l3 3l-3 3l-3-3z" fill="#6fd0f5"/></g></svg>
<svg class="b" style="left:30px;top:452px;" width="13" height="15" viewBox="0 0 13 15"><path d="M0.700 1.700q0-1 1-1h6.300l3.800 3.800v8q0 1-1 1h-9.100q-1 0-1-1z" fill="#fff" stroke="#0e8bd1" stroke-width="1.300"/><path d="M3.500 8.300h8M9.300 5.800l2.600 2.500l-2.600 2.500" fill="none" stroke="#0e8bd1" stroke-width="1.300"/></svg>
<svg class="b" style="left:30px;top:475px;" width="14" height="15" viewBox="0 0 14 15"><path d="M0.700 1.700q0-1 1-1h6.300l3.800 3.800v8q0 1-1 1h-9.100q-1 0-1-1z" fill="#fff" stroke="#0e8bd1" stroke-width="1.300" transform="scale(0.92,0.97)"/><rect x="8" y="8.500" width="5.500" height="6" fill="#ff2a1a"/><rect x="10.200" y="9.600" width="1.200" height="1.800" fill="#fff"/><rect x="10.200" y="12.200" width="1.200" height="1.200" fill="#fff"/></svg>
<svg class="b" style="left:30px;top:497px;" width="13" height="15" viewBox="0 0 13 15"><path d="M0.700 1.700q0-1 1-1h6.300l3.800 3.800v8q0 1-1 1h-9.100q-1 0-1-1z" fill="#e9f5fd" stroke="#0e8bd1" stroke-width="1.300"/><path d="M3.700 7q-1.200 2 0 4M9 7q1.200 2 0 4M5.200 8l2.300 2.300M7.500 8l-2.300 2.300" fill="none" stroke="#0e8bd1" stroke-width="0.900"/></svg>
<svg class="b" style="left:1585px;top:110px;" width="9" height="8" viewBox="0 0 9 8"><path d="M0.800 6.400L4.500 2.500L8.200 6.400" fill="none" stroke="#555" stroke-width="2"/></svg>
<svg class="b" style="left:1585px;top:495px;" width="9" height="8" viewBox="0 0 9 8"><path d="M0.800 1.600L4.500 5.500L8.200 1.600" fill="none" stroke="#555" stroke-width="2"/></svg>
<div class="b" style="left:1582px;top:198px;width:15px;height:17px;background:#c3c8c3;"></div>
<svg class="b" style="left:119px;top:511px;" width="8" height="9" viewBox="0 0 8 9"><path d="M6.200 0.800L2.300 4.500L6.200 8.200" fill="none" stroke="#a6a6a6" stroke-width="1.600"/></svg>
<svg class="b" style="left:1569px;top:511px;" width="8" height="9" viewBox="0 0 8 9"><path d="M1.800 0.800L5.700 4.500L1.800 8.200" fill="none" stroke="#a6a6a6" stroke-width="1.600"/></svg>
<svg class="b" style="left:792px;top:524px;" width="40" height="7" viewBox="0 0 40 7"><path d="M1.500 6.500L8 1.800L14.500 6.500z" fill="#2a90d8"/><path d="M23 1.500L29.500 6.200L36 1.500z" fill="#2a90d8"/></svg>
<svg class="b" style="left:30px;top:536px;" width="12" height="13" viewBox="0 0 12 13"><path d="M0 0h8.500l3 3v10h-11.500z" fill="#1e9ae0"/><rect x="1.3" y="1.5" width="2.2" height="1.900" fill="#e8f6ff"/><rect x="4.6" y="1.5" width="2.6" height="1.900" fill="#e8f6ff"/><rect x="8.3" y="1.5" width="2.2" height="1.900" fill="#e8f6ff"/><rect x="1.3" y="4.5" width="2.2" height="1.900" fill="#e8f6ff"/><rect x="4.6" y="4.5" width="2.6" height="1.900" fill="#e8f6ff"/><rect x="8.3" y="4.5" width="2.2" height="1.900" fill="#e8f6ff"/><rect x="1.3" y="7.5" width="2.2" height="1.900" fill="#e8f6ff"/><rect x="4.6" y="7.5" width="2.6" height="1.900" fill="#e8f6ff"/><rect x="8.3" y="7.5" width="2.2" height="1.900" fill="#e8f6ff"/><rect x="1.3" y="10.2" width="2.2" height="1.900" fill="#e8f6ff"/><rect x="4.6" y="10.2" width="2.6" height="1.900" fill="#e8f6ff"/><rect x="8.3" y="10.2" width="2.2" height="1.900" fill="#e8f6ff"/></svg>
<svg class="b" style="left:79px;top:539px;" width="10" height="10" viewBox="0 0 10 10"><path d="M0.300 0.300L9 9M9 0.300L0.300 9" stroke="#111" stroke-width="1"/></svg>
<svg class="b" style="left:31px;top:562px;" width="16" height="14" viewBox="0 0 16 14"><path d="M3 5.800L0.800 8.500L3 11.200M5 5.800L7.200 8.500L5 11.200" fill="none" stroke="#0e8bd1" stroke-width="1.500"/><path d="M8 3.200v-1.200h7v1.200M11.500 2v10M9.800 12.200h3.400" fill="none" stroke="#0e8bd1" stroke-width="1"/></svg>
<svg class="b" style="left:423px;top:561px;" width="15" height="15" viewBox="0 0 15 15"><path d="M0.300 0.300h5l-1.700 1.700l2.600 2.600l-1.300 1.300l-2.600-2.600l-2 2zM14.700 0.300v5l-1.700-1.700l-2.600 2.600l-1.300-1.300l2.600-2.600l-2-2zM14.700 14.700h-5l1.700-1.700l-2.600-2.600l1.300-1.300l2.600 2.600l2-2zM0.300 14.700v-5l1.700 1.700l2.600-2.600l1.300 1.300l-2.600 2.600l2 2z" fill="#707070"/></svg>
<svg class="b" style="left:1385px;top:562px;" width="7" height="14" viewBox="0 0 7 14"><path d="M0.300 0.800L6.500 7L0.300 13.200z" fill="#8d918d"/></svg>
<div class="b" style="left:1402px;top:561px;width:1px;height:15px;background:#8c8c8c;"></div>
<svg class="b" style="left:1406px;top:566px;" width="11" height="6" viewBox="0 0 11 6"><path d="M0.300 0H10.700L5.500 5.600z" fill="#6f6f6f"/></svg>
<svg class="b" style="left:1432px;top:561px;" width="16" height="15" viewBox="0 0 16 15"><path d="M1.200 8.800l7-7.300l5.300 3.800l-6.500 7.500h-3.300z" fill="none" stroke="#a8a8a8" stroke-width="1.400" stroke-linejoin="round"/><path d="M4.500 5.500l5 4" stroke="#a8a8a8" stroke-width="1.200"/><path d="M10.500 14h3.800" stroke="#a8a8a8" stroke-width="1.100"/></svg>
<svg class="b" style="left:1455px;top:561px;" width="16" height="15" viewBox="0 0 16 15"><path d="M0.800 0.800h9.400l-3.600 5v6l-2.200-2v-4z" fill="none" stroke="#a8a8a8" stroke-width="1.200" stroke-linejoin="round"/><rect x="10" y="9" width="4" height="4" fill="none" stroke="#a8a8a8" stroke-width="1.100"/></svg>
<svg class="b" style="left:1479px;top:561px;" width="14" height="15" viewBox="0 0 14 15"><path d="M0.800 0.800h12l-4.600 5.500v7l-2.800-2.500v-4.500z" fill="#5bc5f5" stroke="#1387d0" stroke-width="1.300" stroke-linejoin="round"/></svg>
<div class="b" style="left:1499px;top:562px;width:2px;height:2px;background:#b9b09d;"></div><div class="b" style="left:1499px;top:566px;width:2px;height:2px;background:#b9b09d;"></div><div class="b" style="left:1499px;top:570px;width:2px;height:2px;background:#b9b09d;"></div><div class="b" style="left:1499px;top:574px;width:2px;height:2px;background:#b9b09d;"></div>
<svg class="b" style="left:1510.5px;top:562.5px;" width="15" height="11" viewBox="0 0 15 11"><path d="M0.300 5.500L5.800 0.300v3.500h8.700v3.400h-8.700v3.500z" fill="#a6a6a6"/></svg>
<svg class="b" style="left:1533px;top:566px;" width="9" height="5" viewBox="0 0 9 5"><path d="M0.300 0H8.300L4.300 4.600z" fill="#777"/></svg>
<svg class="b" style="left:1550.5px;top:562.5px;" width="15" height="11" viewBox="0 0 15 11"><path d="M0.300 5.500L5.800 0.300v3.500h8.700v3.400h-8.700v3.500z" fill="#a6a6a6" transform="translate(15,0) scale(-1,1)"/></svg>
<svg class="b" style="left:1573px;top:566px;" width="9" height="5" viewBox="0 0 9 5"><path d="M0.300 0H8.300L4.300 4.600z" fill="#777"/></svg>
<svg class="b" style="left:54px;top:587px;" width="7" height="9" viewBox="0 0 7 9"><path d="M1.500 4v-1.500a2 2 0 0 1 4 0v1.500" fill="none" stroke="#f5b400" stroke-width="1.100"/><rect x="0.300" y="3.500" width="6.400" height="5" rx="0.800" fill="#ffb400"/></svg>
<svg class="b" style="left:29px;top:624px;" width="15" height="14" viewBox="0 0 15 14"><rect x="0.700" y="0.700" width="13.500" height="12.500" fill="#fff" stroke="#1e9ae0" stroke-width="1.400"/><path d="M0.700 4.800h13.500M0.700 9h13.500M5.200 0.700v12.500M9.700 0.700v12.500" stroke="#1e9ae0" stroke-width="1.200"/></svg>
<svg class="b" style="left:30px;top:686px;" width="14" height="15" viewBox="0 0 14 15"><path d="M0.600 1.200h10.500M5.800 1.200v7M4 8.200h3.600" fill="none" stroke="#0e8bd1" stroke-width="1.100" transform="translate(13,0) rotate(90)"/><path d="M5 9.500L7 11.500L9 9.500M5 12.500L7 14.500L9 12.500" fill="none" stroke="#0e8bd1" stroke-width="1" transform="translate(0,-1)"/></svg>
<svg class="b" style="left:29px;top:778px;" width="15" height="14" viewBox="0 0 15 14"><path d="M1 3.500h5v-2.300h5M13.300 5v8.200h-12.300v-9.700" fill="none" stroke="#0e8bd1" stroke-width="1.400"/><circle cx="12" cy="2.500" r="2.500" fill="#0e8bd1"/><path d="M10.800 2.500h2.400" stroke="#fff" stroke-width="0.900"/></svg>
<svg class="b" style="left:1579px;top:593px;" width="15" height="15" viewBox="0 0 15 15"><rect x="1" y="0" width="14" height="14" fill="#1e9ae0"/><rect x="2.500" y="1.500" width="4" height="6.500" fill="#fff"/><rect x="7.500" y="1.500" width="6" height="6.500" fill="#7fd6f7"/><rect x="2.500" y="9" width="11" height="3.500" fill="#fff"/><circle cx="3" cy="11" r="3" fill="#f7f7f7"/><circle cx="3" cy="11" r="2" fill="none" stroke="#1e88d0" stroke-width="1.400" stroke-dasharray="1.200 0.900"/></svg>
<svg class="b" style="left:1578px;top:651px;" width="14" height="14" viewBox="0 0 14 14"><rect x="0" y="0" width="14" height="14" fill="#2a94dc"/><rect x="1.200" y="1.200" width="11.600" height="11.600" fill="#eaf6fe"/><rect x="1.20" y="1.20" width="1.930" height="1.930" fill="#3a9de0"/><rect x="5.06" y="1.20" width="1.930" height="1.930" fill="#3a9de0"/><rect x="8.92" y="1.20" width="1.930" height="1.930" fill="#3a9de0"/><rect x="3.13" y="3.13" width="1.930" height="1.930" fill="#3a9de0"/><rect x="6.99" y="3.13" width="1.930" height="1.930" fill="#3a9de0"/><rect x="10.85" y="3.13" width="1.930" height="1.930" fill="#3a9de0"/><rect x="1.20" y="5.06" width="1.930" height="1.930" fill="#3a9de0"/><rect x="5.06" y="5.06" width="1.930" height="1.930" fill="#3a9de0"/><rect x="8.92" y="5.06" width="1.930" height="1.930" fill="#3a9de0"/><rect x="3.13" y="6.99" width="1.930" height="1.930" fill="#3a9de0"/><rect x="6.99" y="6.99" width="1.930" height="1.930" fill="#3a9de0"/><rect x="10.85" y="6.99" width="1.930" height="1.930" fill="#3a9de0"/></svg>
<svg class="b" style="left:1578px;top:672px;" width="15" height="16" viewBox="0 0 15 16"><circle cx="7.500" cy="8" r="6.700" fill="none" stroke="#3f95d8" stroke-width="1.300"/><circle cx="5.3" cy="5.8" r="1.200" fill="#3f95d8"/><circle cx="5.3" cy="10.2" r="1.200" fill="#3f95d8"/><circle cx="9.7" cy="5.8" r="1.200" fill="#3f95d8"/><circle cx="9.7" cy="10.2" r="1.200" fill="#3f95d8"/></svg>
<svg class="b" style="left:1578px;top:694px;" width="14" height="16" viewBox="0 0 14 16"><rect x="0" y="5" width="14" height="11" fill="#2a94dc"/><rect x="0.9" y="6.4" width="2.500" height="2.200" fill="#fff"/><rect x="4.2" y="6.4" width="2.500" height="2.200" fill="#fff"/><rect x="7.5" y="6.4" width="2.500" height="2.200" fill="#fff"/><rect x="10.8" y="6.4" width="2.500" height="2.200" fill="#fff"/><rect x="0.9" y="9.5" width="2.500" height="2.200" fill="#fff"/><rect x="4.2" y="9.5" width="2.500" height="2.200" fill="#fff"/><rect x="7.5" y="9.5" width="2.500" height="2.200" fill="#fff"/><rect x="10.8" y="9.5" width="2.500" height="2.200" fill="#fff"/><rect x="0.9" y="12.6" width="2.500" height="2.200" fill="#fff"/><rect x="4.2" y="12.6" width="2.500" height="2.200" fill="#fff"/><rect x="7.5" y="12.6" width="2.500" height="2.200" fill="#fff"/><rect x="10.8" y="12.6" width="2.500" height="2.200" fill="#fff"/><rect x="3.700" y="4.500" width="3.200" height="11.500" fill="#ff8c1a"/><path d="M5.300 0.300v4M3.500 2.200h3.600" stroke="#ff8c1a" stroke-width="1"/><path d="M4 8.900h2.600M4 12h2.600" stroke="#ffd9b0" stroke-width="0.800"/></svg>
<svg class="b" style="left:1578px;top:717px;" width="15" height="14" viewBox="0 0 15 14"><path d="M0.700 0.700h12.600v7M0.700 0.700v12.600h7" fill="none" stroke="#1e88d0" stroke-width="1.400"/><rect x="0" y="0" width="14" height="2.600" fill="#1e88d0"/><rect x="2" y="3.600" width="6.500" height="5.400" fill="#6fcdf5"/><path d="M9.500 11.500h4.500M9.500 9.800v3.400M14 9.800v3.400" stroke="#1e88d0" stroke-width="1.100"/></svg>
<svg class="b" style="left:1578px;top:739px;" width="15" height="14" viewBox="0 0 15 14"><circle cx="3.2" cy="3.2" r="2.700" fill="#2e8fd8"/><path d="M1.8000000000000003 3.2h2.800" stroke="#fff" stroke-width="1"/><circle cx="11" cy="3.2" r="2.700" fill="#2e8fd8"/><path d="M9.6 3.2h2.800" stroke="#fff" stroke-width="1"/><circle cx="3.2" cy="10.8" r="2.700" fill="#2e8fd8"/><path d="M1.8000000000000003 10.8h2.800" stroke="#fff" stroke-width="1"/><circle cx="11" cy="10.8" r="2.700" fill="#ff8c1a"/><path d="M9.6 10.8h2.800" stroke="#fff" stroke-width="1"/></svg>
<svg class="b" style="left:1577px;top:815px;" width="15" height="16" viewBox="0 0 15 16"><rect x="0" y="3" width="4.500" height="12.500" rx="1" fill="#1e88d0"/><path d="M8 4.500h4.500v3M12.500 2l-2.200 2.500l2.200 2.500" fill="none" stroke="#1e88d0" stroke-width="1.200" transform="translate(0,-0.500)"/><path d="M6.500 14h7M11 11.500l2.500 2.500l-2.500 2.500" fill="none" stroke="#1e88d0" stroke-width="1.300" transform="translate(0,-1)"/><path d="M13.200 5v7" stroke="#1e88d0" stroke-width="1.300"/></svg>
<svg class="b" style="left:59px;top:809px;" width="16" height="16" viewBox="0 0 16 16"><path d="M2.500 7.500a5.500 5.500 0 0 1 9.800-3.300M13.500 8.500a5.500 5.500 0 0 1-9.800 3.300" fill="none" stroke="#1e96dc" stroke-width="1.500"/><path d="M10.200 4.800l4 .5l-.8-4zM5.800 11.200l-4-.5l.8 4z" fill="#1e96dc"/><path d="M5 8.800l2-2l2 2l2-2" fill="none" stroke="#1e96dc" stroke-width="1.200"/></svg>
<svg class="b" style="left:117px;top:816px;" width="9" height="5" viewBox="0 0 9 5"><path d="M0.300 0H8.300L4.300 4.600z" fill="#222"/></svg>
<div class="b" style="left:134px;top:811px;width:2px;height:2px;background:#b9b09d;"></div><div class="b" style="left:134px;top:815px;width:2px;height:2px;background:#b9b09d;"></div><div class="b" style="left:134px;top:819px;width:2px;height:2px;background:#b9b09d;"></div><div class="b" style="left:134px;top:823px;width:2px;height:2px;background:#b9b09d;"></div>
<svg class="b" style="left:145px;top:809px;" width="16" height="16" viewBox="0 0 16 16"><circle cx="8" cy="8" r="6.600" fill="none" stroke="#a3a3a3" stroke-width="1.300"/><path d="M4.800 8l2.500 2.600l4.200-5" fill="none" stroke="#a3a3a3" stroke-width="1.300"/></svg>
<svg class="b" style="left:203px;top:816px;" width="9" height="5" viewBox="0 0 9 5"><path d="M0.300 0H8.300L4.300 4.600z" fill="#777"/></svg>
<svg class="b" style="left:221px;top:811px;" width="12" height="13" viewBox="0 0 12 13"><rect x="0.600" y="0.600" width="10.800" height="11.300" fill="none" stroke="#a3a3a3" stroke-width="1.100"/><path d="M3.300 3.500l5.400 5.500M8.700 3.500l-5.400 5.500" stroke="#a3a3a3" stroke-width="1"/></svg>
<div class="b" style="left:273px;top:804px;width:1px;height:27px;background:#8b8f8b;"></div>
<svg class="b" style="left:283px;top:810px;" width="16" height="15" viewBox="0 0 16 15"><path d="M0.500 1.500h14M0.500 6.200h10M0.500 11h6" stroke="#1787d3" stroke-width="1.500"/><path d="M8 14l1-3l4.500-4.500l2 2l-4.500 4.500z" fill="#1787d3"/></svg>
<svg class="b" style="left:307px;top:810px;" width="16" height="15" viewBox="0 0 16 15"><path d="M0.500 1.500h14M0.500 6.200h6M0.500 11h6" stroke="#a0a0a0" stroke-width="1.500"/><path d="M11.500 5v8M7.500 9h8" stroke="#a0a0a0" stroke-width="1.500"/></svg>
<svg class="b" style="left:331px;top:810px;" width="16" height="15" viewBox="0 0 16 15"><path d="M0.500 1.500h14M0.500 6.200h3M0.500 11h3" stroke="#a0a0a0" stroke-width="1.500"/><path d="M7 5.500q-2 3.500 0 7M13 5.500q2 3.500 0 7M10 6.800v4.400M7.800 9h4.400" fill="none" stroke="#a0a0a0" stroke-width="1"/></svg>
<svg class="b" style="left:355px;top:810px;" width="16" height="15" viewBox="0 0 16 15"><path d="M0.500 1.500h14M0.500 6.200h6M0.500 11h6M8.500 9h7" stroke="#a0a0a0" stroke-width="1.500"/></svg>
<div class="b" style="left:379px;top:811px;width:2px;height:2px;background:#b9b09d;"></div><div class="b" style="left:379px;top:815px;width:2px;height:2px;background:#b9b09d;"></div><div class="b" style="left:379px;top:819px;width:2px;height:2px;background:#b9b09d;"></div><div class="b" style="left:379px;top:823px;width:2px;height:2px;background:#b9b09d;"></div>
<svg class="b" style="left:387px;top:809px;" width="13" height="16" viewBox="0 0 13 16"><path d="M1.500 1v14" stroke="#8e8e8e" stroke-width="2.100"/><path d="M11.500 1.200L4.800 8L11.500 14.800" fill="none" stroke="#8e8e8e" stroke-width="2.100"/></svg>
<svg class="b" style="left:411px;top:809px;" width="11" height="16" viewBox="0 0 11 16"><path d="M8.800 1.800L2.800 8L8.800 14.200" fill="none" stroke="#8e8e8e" stroke-width="2.100"/></svg>
<svg class="b" style="left:436px;top:809px;" width="11" height="16" viewBox="0 0 11 16"><path d="M2.200 1.800L8.200 8L2.200 14.200" fill="none" stroke="#1787d3" stroke-width="2.100"/></svg>
<svg class="b" style="left:457px;top:809px;" width="13" height="16" viewBox="0 0 13 16"><path d="M11.200 1v14" stroke="#1787d3" stroke-width="2.100"/><path d="M1.200 1.200L7.900 8L1.200 14.800" fill="none" stroke="#1787d3" stroke-width="2.100"/></svg>
<svg class="b" style="left:478px;top:809px;" width="16" height="16" viewBox="0 0 16 16"><path d="M1 4.500v-3.500h3.500M11.500 1h3.500v3.500M15 11.500v3.500h-3.500M4.500 15h-3.500v-3.500" fill="none" stroke="#a0a0a0" stroke-width="1.200"/><path d="M5 4.500h4l2 2v5h-6z" fill="none" stroke="#a0a0a0" stroke-width="1.100"/></svg>
<div class="b" style="left:502px;top:811px;width:2px;height:2px;background:#b9b09d;"></div><div class="b" style="left:502px;top:815px;width:2px;height:2px;background:#b9b09d;"></div><div class="b" style="left:502px;top:819px;width:2px;height:2px;background:#b9b09d;"></div><div class="b" style="left:502px;top:823px;width:2px;height:2px;background:#b9b09d;"></div>
<svg class="b" style="left:517px;top:809px;" width="14" height="16" viewBox="0 0 14 16"><path d="M1 10.500v4h11.500v-4" fill="none" stroke="#1787d3" stroke-width="1.300"/><path d="M6.800 11.500v-8" stroke="#1787d3" stroke-width="1.800"/><path d="M3.300 5l3.500-4.200l3.500 4.200z" fill="#1787d3"/></svg>
<svg class="b" style="left:607px;top:816px;" width="9" height="5" viewBox="0 0 9 5"><path d="M0.300 0H8.300L4.300 4.600z" fill="#222"/></svg>
<div class="b" style="left:624px;top:811px;width:2px;height:2px;background:#b9b09d;"></div><div class="b" style="left:624px;top:815px;width:2px;height:2px;background:#b9b09d;"></div><div class="b" style="left:624px;top:819px;width:2px;height:2px;background:#b9b09d;"></div><div class="b" style="left:624px;top:823px;width:2px;height:2px;background:#b9b09d;"></div>
<svg class="b" style="left:631px;top:809.5px;" width="15" height="15" viewBox="0 0 15 15"><g transform="translate(0.300,0.300)"><path d="M6 0h2.400l.5 1.900l1.400 .6l1.700-1l1.700 1.700l-1 1.700l.6 1.400l1.900 .5v2.400l-1.900 .5l-.6 1.400l1 1.700l-1.700 1.700l-1.700-1l-1.400 .6l-.5 1.900h-2.400l-.5-1.900l-1.400-.6l-1.700 1l-1.700-1.700l1-1.700l-.6-1.400l-1.900-.5v-2.400l1.900-.5l.6-1.400l-1-1.700l1.700-1.700l1.700 1l1.400-.6z" fill="#0e8bd1"/><path d="M7.200 4.200l3 3l-3 3l-3-3z" fill="#6fd0f5"/></g></svg>
<svg class="b" style="left:714px;top:809px;" width="16" height="16" viewBox="0 0 16 16"><path d="M1 10.500v4h13.500v-4" fill="none" stroke="#1787d3" stroke-width="1.300"/><path d="M2 1l5.800 5.500l5.800-5.500M7.800 6.500v2.500" fill="none" stroke="#1787d3" stroke-width="1.300"/><path d="M5.500 8l2.300 2.800l2.300-2.800z" fill="#1787d3"/></svg>
<div class="b" style="left:751px;top:811px;width:2px;height:2px;background:#b9b09d;"></div><div class="b" style="left:751px;top:815px;width:2px;height:2px;background:#b9b09d;"></div><div class="b" style="left:751px;top:819px;width:2px;height:2px;background:#b9b09d;"></div><div class="b" style="left:751px;top:823px;width:2px;height:2px;background:#b9b09d;"></div>
<div class="b" style="left:780.0px;top:816px;width:1.3px;height:1.3px;background:#2a7fd0;"></div>
<div class="b" style="left:782.6px;top:816px;width:1.3px;height:1.3px;background:#2a7fd0;"></div>
<div class="b" style="left:785.2px;top:816px;width:1.3px;height:1.3px;background:#2a7fd0;"></div>
<div class="b" style="left:1315px;top:839px;width:2px;height:2px;background:#b9b9b9;"></div>
<div class="b" style="left:1315px;top:843px;width:2px;height:2px;background:#b9b9b9;"></div>
<div class="b" style="left:1315px;top:847px;width:2px;height:2px;background:#b9b9b9;"></div>
<svg class="b" style="left:16px;top:872px;" width="16" height="16" viewBox="0 0 16 16"><path d="M0 2.300l6.600-.9v6.300h-6.600zM7.400 1.300l8.600-1.200v7.600h-8.600zM0 8.500h6.600v6.300l-6.600-.9zM7.400 8.500h8.600v7.600l-8.600-1.200z" fill="#fff"/></svg>
<svg class="b" style="left:63px;top:870px;" width="18" height="19" viewBox="0 0 18 19"><circle cx="11.300" cy="7" r="5.200" fill="none" stroke="#fff" stroke-width="1.300"/><path d="M7.600 10.800L1.200 17.600" stroke="#fff" stroke-width="1.500"/></svg>
<svg class="b" style="left:111px;top:871px;" width="18" height="17" viewBox="0 0 18 17"><rect x="1.500" y="3.500" width="10" height="9" fill="none" stroke="#fff" stroke-width="1.200"/><path d="M1 1.500h11M1 14.500h11" fill="none" stroke="#fff" stroke-width="1"/><path d="M15.500 1v3M15.500 9v6" stroke="#fff" stroke-width="1"/><rect x="14" y="5" width="3" height="3" fill="#fff"/></svg>
<svg class="b" style="left:158px;top:866px;" width="26" height="26" viewBox="0 0 26 26"><path d="M4.800 17.500q-4.500 7 0.300 6.600q3.200-.3 7.500-3.400" fill="none" stroke="#f2b91a" stroke-width="1.700"/><g transform="translate(13.800,14.600)"><path d="M6.200 4.400A7.500 7.500 0 1 1 7.400 0.400H-6.500" fill="none" stroke="#1fb4ea" stroke-width="4.800"/><path d="M-3.500 -4.500a5.500 5.500 0 0 1 6.500 -.5" fill="none" stroke="#8fe0fa" stroke-width="1.200"/></g><path d="M3.500 12.500q3.500-7.500 11-9.800q7-2 8.800 .8q1 1.800-0.500 5" fill="none" stroke="#f6c62a" stroke-width="1.900"/></svg>
<svg class="b" style="left:209px;top:870px;" width="22" height="19" viewBox="0 0 22 19"><path d="M0.500 2.500q0-1.500 1.500-1.500h5.500l2 2h11q1 0 1 1v13.500h-21z" fill="#ffd766"/><path d="M0.500 5h21v13h-21z" fill="#ffe69a"/><path d="M4.500 11.500h13v6.500h-3v-3.500h-7v3.500h-3z" fill="#2f9be8"/><path d="M0.500 17h21v1.500h-21z" fill="#e6b93c"/></svg>
<svg class="b" style="left:256.5px;top:867.5px;" width="25" height="25" viewBox="0 0 25 25"><g transform="translate(12.500,12.500)"><circle r="11.200" fill="#fbfbfa" stroke="#3fb0b0" stroke-width="2"/><path d="M-5 9.200L-3.500 2L-0.500 -1.500L1.500 1.500L4.500 -0.500L6.200 1.500L5.500 6L3 9.800Q-1 10.800 -5 9.200Z" fill="#33292a"/><path d="M-0.500 3.500l1.500 3.500M3 2.500l-.5 4" stroke="#fbfbfa" stroke-width="1"/><path d="M-6 0q.5-5 5.500-6.500q4-.8 6.500 2" fill="none" stroke="#8a8480" stroke-width="0.900"/><path d="M3.800 -4.800l3.300 .6l-1.600 2.200z" fill="#2a2222"/><path d="M-1 -4.200l1.800 .2" stroke="#2a2222" stroke-width="0.900"/></g></svg>
<svg class="b" style="left:305.5px;top:867.5px;" width="25" height="25" viewBox="0 0 25 25"><g transform="translate(12.500,12.500)"><circle r="11.200" fill="#fbfbfa" stroke="#3fb0b0" stroke-width="2"/><path d="M-5 9.200L-3.500 2L-0.500 -1.500L1.500 1.500L4.500 -0.500L6.200 1.500L5.500 6L3 9.800Q-1 10.800 -5 9.200Z" fill="#33292a"/><path d="M-0.500 3.500l1.500 3.500M3 2.500l-.5 4" stroke="#fbfbfa" stroke-width="1"/><path d="M-6 0q.5-5 5.500-6.500q4-.8 6.500 2" fill="none" stroke="#8a8480" stroke-width="0.900"/><path d="M3.800 -4.800l3.300 .6l-1.600 2.200z" fill="#2a2222"/><path d="M-1 -4.200l1.800 .2" stroke="#2a2222" stroke-width="0.900"/></g></svg>
<svg class="b" style="left:1347px;top:876px;" width="14" height="8" viewBox="0 0 14 8"><path d="M1 7L7 1.200L13 7" fill="none" stroke="#fff" stroke-width="1.300"/></svg>
<svg class="b" style="left:1372px;top:872px;" width="15" height="17" viewBox="0 0 15 17"><rect x="3" y="0.600" width="6" height="4.500" fill="none" stroke="#fff" stroke-width="1.100"/><path d="M4.800 2.300v1.200M7.200 2.300v1.200" stroke="#fff" stroke-width="1"/><path d="M9.500 15.400h-7.500v-10.300h8v6.500" fill="none" stroke="#fff" stroke-width="1.100"/><path d="M8.500 13.500l2 2l3.500-4" fill="none" stroke="#aaa" stroke-width="1.100"/></svg>
<svg class="b" style="left:1393px;top:873px;" width="18" height="15" viewBox="0 0 18 15"><rect x="3.500" y="0.600" width="13.500" height="9.500" fill="none" stroke="#fff" stroke-width="1.100"/><path d="M10 10v3.500M6 13.800h8" stroke="#fff" stroke-width="1.100"/><rect x="0.600" y="1.500" width="4.500" height="4" fill="#000" stroke="#fff" stroke-width="1"/><path d="M2.800 5.500v8" stroke="#fff" stroke-width="1.100"/><path d="M2 3h1.800" stroke="#fff" stroke-width="1"/></svg>
<svg class="b" style="left:1417px;top:873px;" width="18" height="14" viewBox="0 0 18 14"><path d="M0.600 4.500h3l3.800-3.700v12.400l-3.800-3.700h-3z" fill="none" stroke="#fff" stroke-width="1.100"/><path d="M9.500 4.500q1.500 2.500 0 5M12 2.800q2.500 4.200 0 8.400M14.500 1q3.500 6 0 12" fill="none" stroke="#fff" stroke-width="1.100"/></svg>
<svg class="b" style="left:1559px;top:872px;" width="17" height="16" viewBox="0 0 17 16"><path d="M0.700 0.700h14.600v11h-5.300l-2.200 2.500l-2.200-2.500h-4.900z" fill="none" stroke="#fff" stroke-width="1.200"/></svg>
<div class="b" style="left:0px;top:0px;width:1600px;height:860px;overflow:hidden;pointer-events:none;"><div class="wm" style="left:74px;top:206px;letter-spacing:0.85px">audit审计01(Audit1)</div><div class="wm" style="left:89px;top:226px;letter-spacing:0.45px">audit-172.18.210.237</div><div class="wm" style="left:374px;top:206px;letter-spacing:0.85px">audit审计01(Audit1)</div><div class="wm" style="left:389px;top:226px;letter-spacing:0.45px">audit-172.18.210.237</div><div class="wm" style="left:674px;top:206px;letter-spacing:0.85px">audit审计01(Audit1)</div><div class="wm" style="left:689px;top:226px;letter-spacing:0.45px">audit-172.18.210.237</div><div class="wm" style="left:974px;top:206px;letter-spacing:0.85px">audit审计01(Audit1)</div><div class="wm" style="left:989px;top:226px;letter-spacing:0.45px">audit-172.18.210.237</div><div class="wm" style="left:1274px;top:206px;letter-spacing:0.85px">audit审计01(Audit1)</div><div class="wm" style="left:1289px;top:226px;letter-spacing:0.45px">audit-172.18.210.237</div><div class="wm" style="left:1574px;top:206px;letter-spacing:0.85px">audit审计01(Audit1)</div><div class="wm" style="left:1589px;top:226px;letter-spacing:0.45px">audit-172.18.210.237</div><div class="wm" style="left:74px;top:506px;letter-spacing:0.85px">audit审计01(Audit1)</div><div class="wm" style="left:89px;top:526px;letter-spacing:0.45px">audit-172.18.210.237</div><div class="wm" style="left:374px;top:506px;letter-spacing:0.85px">audit审计01(Audit1)</div><div class="wm" style="left:389px;top:526px;letter-spacing:0.45px">audit-172.18.210.237</div><div class="wm" style="left:674px;top:506px;letter-spacing:0.85px">audit审计01(Audit1)</div><div class="wm" style="left:689px;top:526px;letter-spacing:0.45px">audit-172.18.210.237</div><div class="wm" style="left:974px;top:506px;letter-spacing:0.85px">audit审计01(Audit1)</div><div class="wm" style="left:989px;top:526px;letter-spacing:0.45px">audit-172.18.210.237</div><div class="wm" style="left:1274px;top:506px;letter-spacing:0.85px">audit审计01(Audit1)</div><div class="wm" style="left:1289px;top:526px;letter-spacing:0.45px">audit-172.18.210.237</div><div class="wm" style="left:1574px;top:506px;letter-spacing:0.85px">audit审计01(Audit1)</div><div class="wm" style="left:1589px;top:526px;letter-spacing:0.45px">audit-172.18.210.237</div><div class="wm" style="left:74px;top:806px;letter-spacing:0.85px">audit审计01(Audit1)</div><div class="wm" style="left:89px;top:826px;letter-spacing:0.45px">audit-172.18.210.237</div><div class="wm" style="left:374px;top:806px;letter-spacing:0.85px">audit审计01(Audit1)</div><div class="wm" style="left:389px;top:826px;letter-spacing:0.45px">audit-172.18.210.237</div><div class="wm" style="left:674px;top:806px;letter-spacing:0.85px">audit审计01(Audit1)</div><div class="wm" style="left:689px;top:826px;letter-spacing:0.45px">audit-172.18.210.237</div><div class="wm" style="left:974px;top:806px;letter-spacing:0.85px">audit审计01(Audit1)</div><div class="wm" style="left:989px;top:826px;letter-spacing:0.45px">audit-172.18.210.237</div><div class="wm" style="left:1274px;top:806px;letter-spacing:0.85px">audit审计01(Audit1)</div><div class="wm" style="left:1289px;top:826px;letter-spacing:0.45px">audit-172.18.210.237</div><div class="wm" style="left:1574px;top:806px;letter-spacing:0.85px">audit审计01(Audit1)</div><div class="wm" style="left:1589px;top:826px;letter-spacing:0.45px">audit-172.18.210.237</div></div>
</body></html>
